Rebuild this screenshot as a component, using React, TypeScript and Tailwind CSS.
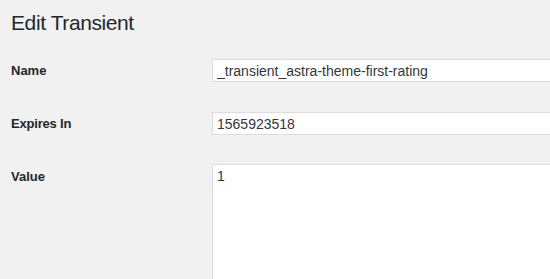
export default function App() {
  return (
    <div
      className="w-[550px] h-[279px] overflow-hidden bg-[#f1f1f1] text-[#23282d]"
      style={{ fontFamily: "'Liberation Sans', Arial, sans-serif" }}
    >
      <h1 className="pl-[11px] pt-[9px] text-[21px] leading-[28px] tracking-[-0.4px] font-normal">
        Edit Transient
      </h1>

      <div className="mt-[22px] flex flex-col gap-[30px] pl-[11px]">
        {/* Name */}
        <div className="flex items-center">
          <label className="w-[201px] shrink-0 text-[13px] font-bold">
            Name
          </label>
          <input
            readOnly
            value="_transient_astra-theme-first-rating"
            className="w-[400px] shrink-0 h-[23px] bg-white border border-[#dddddd] px-[4px] text-[14px] text-[#32373c] outline-none"
          />
        </div>

        {/* Expires */}
        <div className="flex items-center">
          <label className="w-[201px] shrink-0 text-[13px] tracking-[-0.2px] font-bold">
            Expires In
          </label>
          <input
            readOnly
            value="1565923518"
            className="w-[400px] shrink-0 h-[23px] bg-white border border-[#dddddd] px-[4px] text-[14px] text-[#32373c] outline-none"
          />
        </div>

        {/* Value */}
        <div className="flex items-start -mt-[1px]">
          <label className="w-[201px] shrink-0 pt-[3px] text-[13px] font-bold">
            Value
          </label>
          <textarea
            readOnly
            value="1"
            className="w-[400px] shrink-0 h-[160px] resize-none bg-white border border-[#dddddd] pl-[4px] pt-[1px] text-[14px] text-[#32373c] outline-none"
          />
        </div>
      </div>
    </div>
  );
}
